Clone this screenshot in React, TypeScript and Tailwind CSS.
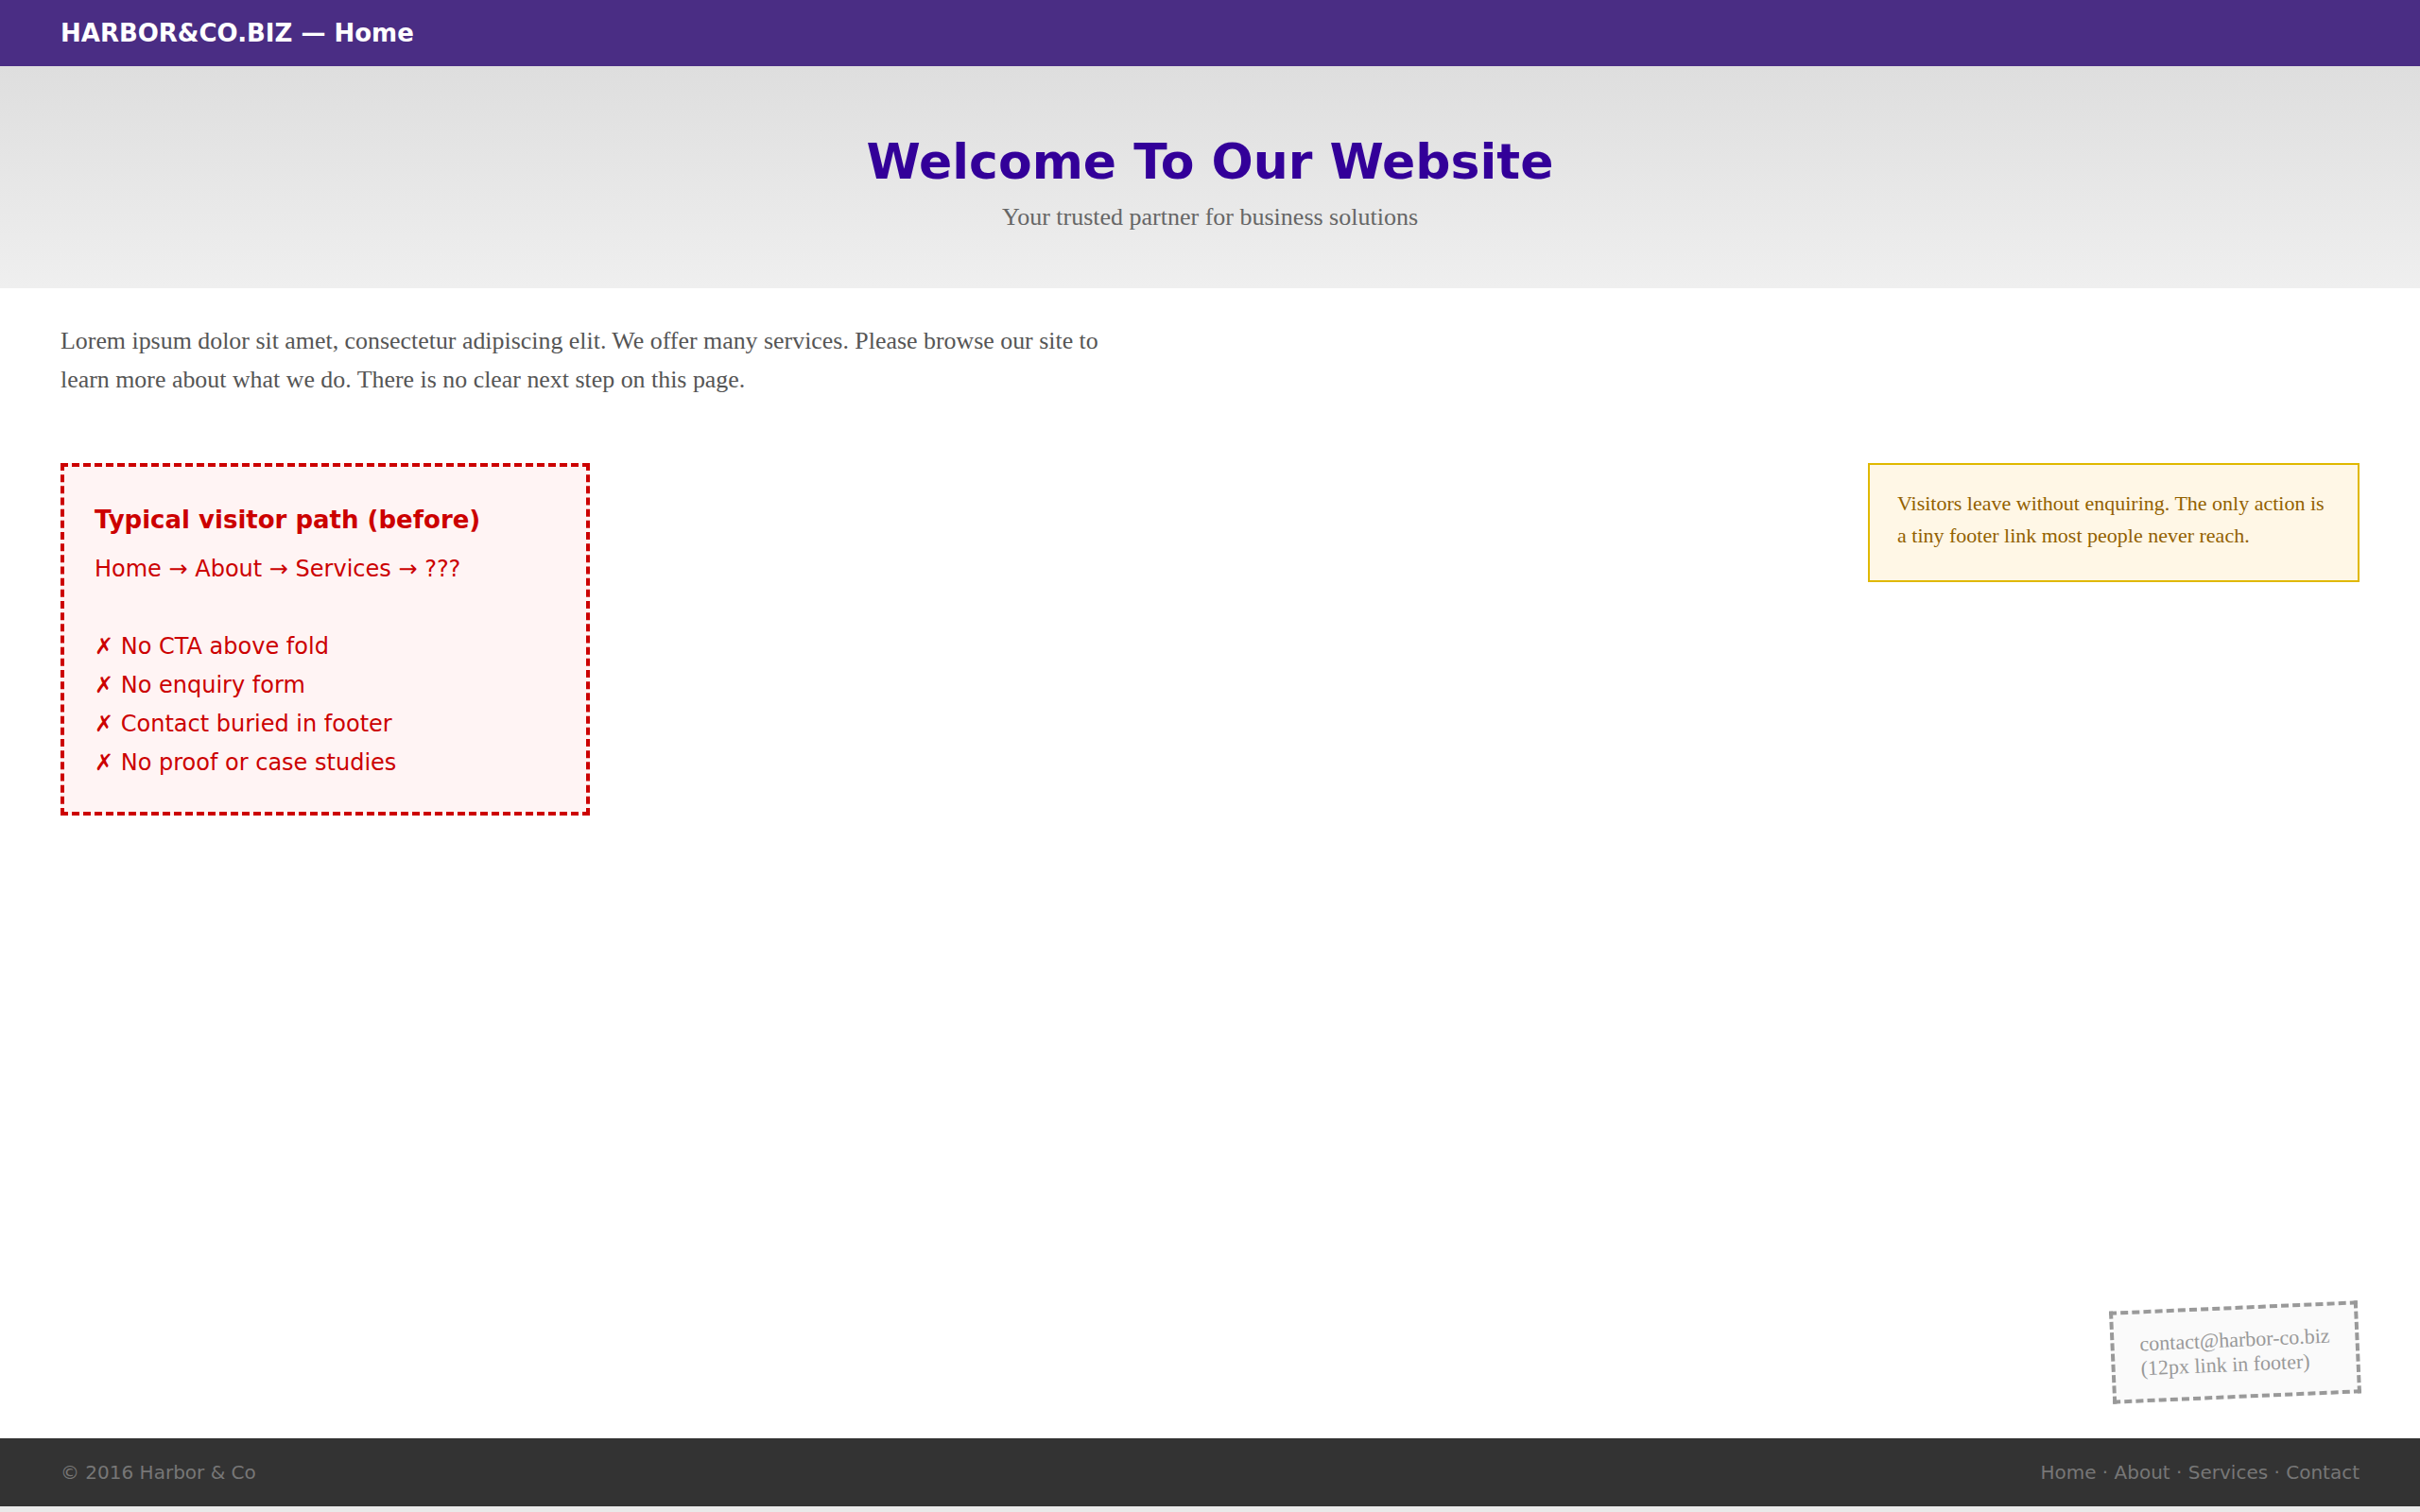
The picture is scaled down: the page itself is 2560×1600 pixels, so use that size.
import * as React from "react";

const sans = "font-['DejaVu_Sans',sans-serif]";
const serif = "font-['Liberation_Serif',serif]";

const problems = [
  "No CTA above fold",
  "No enquiry form",
  "Contact buried in footer",
  "No proof or case studies",
];

export default function App() {
  return (
    <div className="min-h-screen bg-[#e9e9e9]">
      <div className="flex h-[1594px] flex-col bg-white">
        <header className="flex h-[70px] items-center bg-[#4a2d84] px-[64px]">
          <span className={`${sans} text-[26px] font-bold text-white`}>HARBOR&amp;CO.BIZ — Home</span>
        </header>

        <section className="bg-gradient-to-b from-[#dedede] to-[#efefef] pt-[70px] pb-[56px] text-center">
          <h1 className={`${sans} text-[52px] font-bold leading-[1.2] text-[#330099]`}>Welcome To Our Website</h1>
          <p className={`${serif} mt-[8px] text-[26px] leading-[1.5] text-[#666]`}>
            Your trusted partner for business solutions
          </p>
        </section>

        <main className="flex flex-1 flex-col px-[64px] pt-[35px]">
          <p className={`${serif} max-w-[1120px] text-[25.9px] leading-[41px] text-[#555]`}>
            Lorem ipsum dolor sit amet, consectetur adipiscing elit. We offer many services. Please browse our site to
            learn more about what we do. There is no clear next step on this page.
          </p>

          <div className="mt-[68px] flex items-start justify-between">
            <div className={`${sans} w-[560px] border-4 border-dashed border-[#cc0000] bg-[#fff4f4] px-[32px] pt-[40px] pb-[32px] text-[#cc0000]`}>
              <h2 className="text-[26px] font-bold leading-[32px]">Typical visitor path (before)</h2>
              <div className="mt-[16px] text-[24px] leading-[1.7]">
                <div>Home → About → Services → ???</div>
                <div className="h-[41px]" />
                {problems.map((p) => (
                  <div key={p}>✗ {p}</div>
                ))}
              </div>
            </div>

            <div className={`${serif} w-[520px] border-2 border-[#e0b800] bg-[#fff7e6] px-[29px] pt-[24px] pb-[30px] text-[22px] leading-[34px] text-[#936100]`}>
              Visitors leave without enquiring. The only action is a tiny footer link most people never reach.
            </div>
          </div>

          <div className="mt-auto flex justify-end pb-[42px]">
            <div className={`${serif} -rotate-[2.5deg] border-4 border-dashed border-[#999] bg-[#fafafa] px-[27px] py-[19px] text-[22px] leading-[26px] text-[#999]`}>
              contact@harbor-co.biz
              <br />
              (12px link in footer)
            </div>
          </div>
        </main>

        <footer className={`${sans} flex h-[72px] items-center justify-between bg-[#333] px-[64px] text-[20px] text-[#777]`}>
          <span>© 2016 Harbor &amp; Co</span>
          <span>Home · About · Services · Contact</span>
        </footer>
      </div>
    </div>
  );
}
